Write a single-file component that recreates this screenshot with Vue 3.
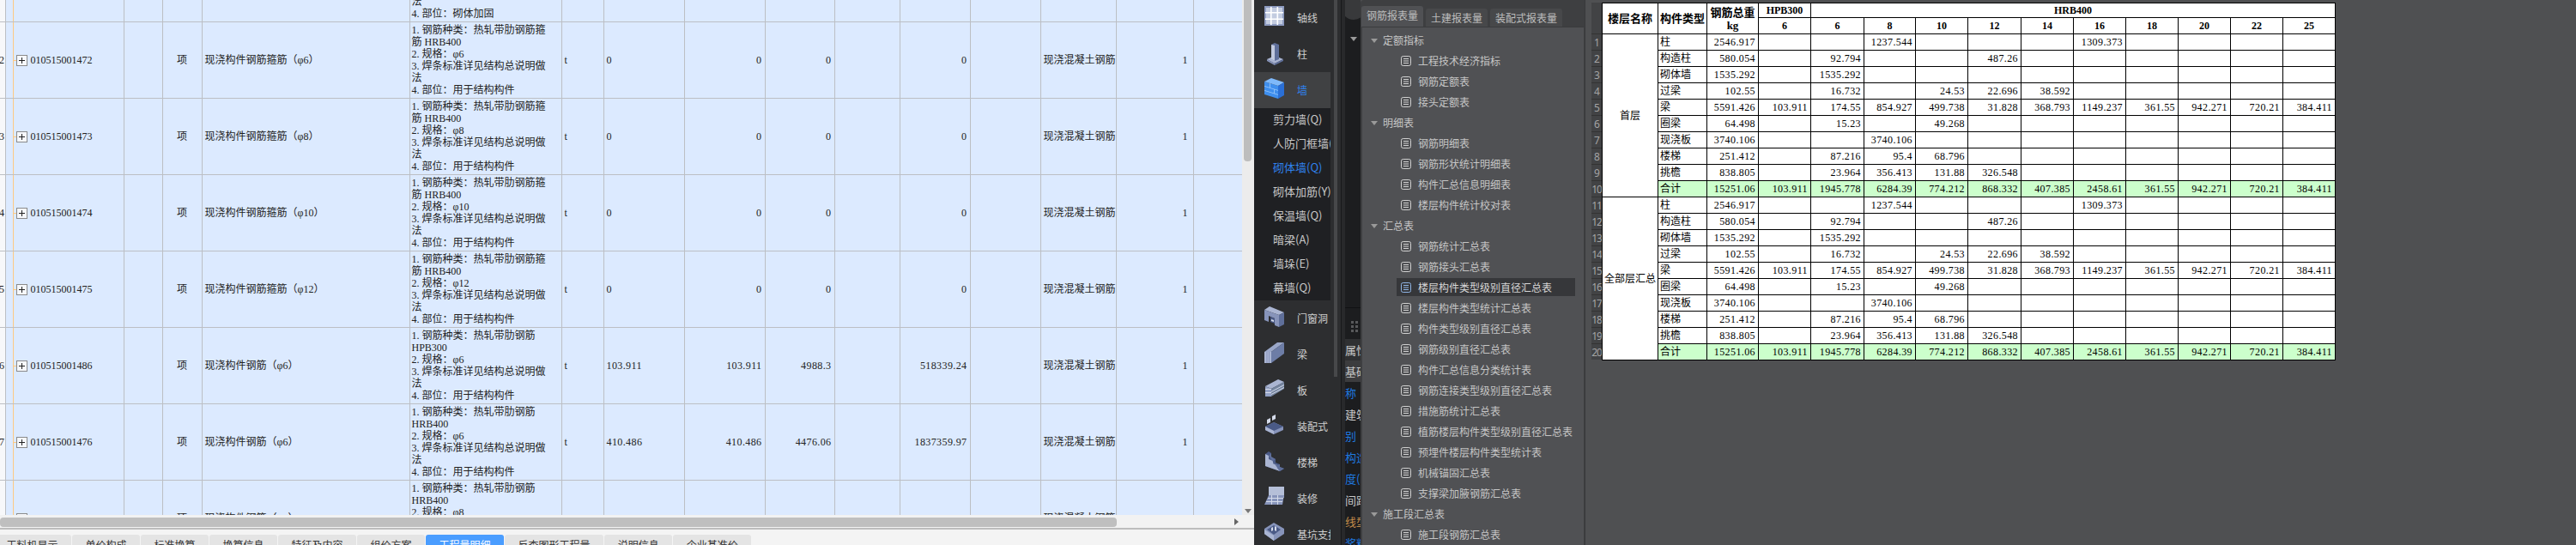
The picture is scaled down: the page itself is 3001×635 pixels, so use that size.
<script setup>
const leftCols = [6, 9, 129, 45, 46, 242, 177, 49, 94, 94, 81, 76, 82, 82, 88, 90, 57]

const descLines = (grade, spec, stirrup, place = '用于结构构件') => [
  stirrup ? '1. 钢筋种类：热轧带肋钢筋箍' : '1. 钢筋种类：热轧带肋钢筋',
  stirrup ? '筋 ' + grade : grade,
  '2. 规格：φ' + spec,
  '3. 焊条标准详见结构总说明做',
  '法',
  '4. 部位：' + place
]

const items = [
  { rn: '871', code: '010515001471', name: '现浇构件钢筋箍筋（φ4）', desc: descLines('HRB400', '4', true, '砌体加固'), a: '0', b: '0', c: '0', d: '0' },
  { rn: '872', code: '010515001472', name: '现浇构件钢筋箍筋（φ6）', desc: descLines('HRB400', '6', true), a: '0', b: '0', c: '0', d: '0' },
  { rn: '873', code: '010515001473', name: '现浇构件钢筋箍筋（φ8）', desc: descLines('HRB400', '8', true), a: '0', b: '0', c: '0', d: '0' },
  { rn: '874', code: '010515001474', name: '现浇构件钢筋箍筋（φ10）', desc: descLines('HRB400', '10', true), a: '0', b: '0', c: '0', d: '0' },
  { rn: '875', code: '010515001475', name: '现浇构件钢筋箍筋（φ12）', desc: descLines('HRB400', '12', true), a: '0', b: '0', c: '0', d: '0' },
  { rn: '876', code: '010515001486', name: '现浇构件钢筋（φ6）', desc: descLines('HPB300', '6', false), a: '103.911', b: '103.911', c: '4988.3', d: '518339.24' },
  { rn: '877', code: '010515001476', name: '现浇构件钢筋（φ6）', desc: descLines('HRB400', '6', false), a: '410.486', b: '410.486', c: '4476.06', d: '1837359.97' },
  { rn: '878', code: '010515001477', name: '现浇构件钢筋（φ8）', desc: descLines('HRB400', '8', false), a: '6284.39', b: '6284.39', c: '4451.84', d: '28160001.9' }
]

const tabs = ['工料机显示', '单价构成', '标准换算', '换算信息', '特征及内容', '组价方案', '工程量明细', '反查图形工程量', '说明信息', '企业基准价']

const L = '#aab5d2', M = '#8794ba', D = '#5f6f9a', K = '#4a5a86', W = '#d5dbea'
const icons = {
  axis: [
    { d: 'M0 0H23V23H0Z', f: '#8d9bc0' },
    { d: 'M2 2H21V21H2Z', f: '#c3cce0' },
    { d: 'M7 1h1.6v21H7zM14.5 1h1.6v21h-1.6zM1 7h21v1.6H1zM1 14.5h21v1.6H1z', f: '#fff' }
  ],
  column: [
    { d: 'M3 20L12 16L22 20L12 25Z', f: L },
    { d: 'M3 20L12 25V27L3 22Z', f: M },
    { d: 'M12 25L22 20V22L12 27Z', f: D },
    { d: 'M8 3L12 1L17 3V20L12 22L8 20Z', f: D },
    { d: 'M8 3L12 4V22L8 20Z', f: '#c1c9de' }
  ],
  wall: [
    { d: 'M0 4L16 9V24L0 19Z', f: '#3f8fee' },
    { d: 'M0 4L8 0L23 5L16 9Z', f: '#7fb9fa' },
    { d: 'M16 9L23 5V20L16 24Z', f: '#2a6fd6' },
    { d: 'M0 9l16 5v.8L0 9.8zM0 14l16 5v.8L0 14.8zM6 6l.8.2v5l-.8-.2zM11 13l.8.2v5l-.8-.2z', f: '#9cc9fb' }
  ],
  door: [
    { d: 'M0 4L6 0L23 7L17 10Z', f: L },
    { d: 'M0 4L17 10V24L12 22V14L5 11V18L0 16Z', f: M },
    { d: 'M17 10L23 7V21L17 24Z', f: D },
    { d: 'M7 12l5 2v6l-5-2z', f: K },
    { d: 'M8 15l3 1v2l-3-1z', f: W }
  ],
  beam: [
    { d: 'M0 11L15 0H23L8 11Z', f: '#9aa7c8' },
    { d: 'M8 11L23 0V13L8 24Z', f: '#6d7da6' },
    { d: 'M0 11H8V24H0Z', f: L },
    { d: 'M2.5 11h1v13h-1zM5 11h1v13H5z', f: M }
  ],
  slab: [
    { d: 'M1 9L16 1L23 4L8 12Z', f: L },
    { d: 'M1 9L8 12V21H1Z', f: '#93a1c4' },
    { d: 'M8 12L23 4V12L8 21Z', f: '#74849f' },
    { d: 'M1 12H8V13H1ZM1 16H8V17H1ZM8 15L23 7V8L8 16ZM8 18L23 10V11L8 19Z', f: W }
  ],
  prefab: [
    { d: 'M1 14L11 9L22 14V18L11 23L1 18Z', f: M },
    { d: 'M1 14L11 9L22 14L11 19Z', f: K },
    { d: 'M1 14L11 19V23L1 18Z', f: L },
    { d: 'M3 6l4-2v5l-4 2zM9 2l4-2v5l-4 2z', f: W }
  ],
  stair: [
    { d: 'M1 4L5 1L8 3V8L13 10V14L18 16V19L23 21L18 24L1 18Z', f: K },
    { d: 'M1 4L5 6V10L10 12V15L15 17V20L18 24L1 18Z', f: L },
    { d: 'M5 6L8 3V7L13 10L10 12V15L15 17L18 16V19L23 21L18 24L15 20Z', f: D }
  ],
  finish: [
    { d: 'M5 0H23V13H5Z', f: '#b5bfd8' },
    { d: 'M5 10H23L21 21H0Z', f: M },
    { d: 'M4 13h18v1H4zM2 17h19v1H2zM8 10h1v11H8zM15 10h1v11h-1z', f: W }
  ],
  pit: [
    { d: 'M11 0L23 7V13L11 21L0 13V7Z', f: M },
    { d: 'M11 3L19 8L11 14L3 8Z', f: K },
    { d: 'M0 8L11 15V21L0 13Z', f: L },
    { d: 'M8 6l2-1v4l-2 1zM12 4l2 1v5l-2-1z', f: W }
  ]
}

const mainTop = [
  { icon: 'axis', label: '轴线' },
  { icon: 'column', label: '柱' },
  { icon: 'wall', label: '墙', active: true }
]
const subItems = [
  { label: '剪力墙(Q)' }, { label: '人防门框墙(RFM)' }, { label: '砌体墙(Q)', active: true },
  { label: '砌体加筋(Y)' }, { label: '保温墙(Q)' }, { label: '暗梁(A)' }, { label: '墙垛(E)' }, { label: '幕墙(Q)' }
]
const mainBottom = [
  { icon: 'door', label: '门窗洞' }, { icon: 'beam', label: '梁' }, { icon: 'slab', label: '板' },
  { icon: 'prefab', label: '装配式' }, { icon: 'stair', label: '楼梯' }, { icon: 'finish', label: '装修' },
  { icon: 'pit', label: '基坑支护' }
]

const backRows = [
  { t: '属性', c: 'b-head' }, { t: '基础层', c: 'b-sel' }, { t: '称', c: 'b-blue' }, { t: '建筑', c: '' },
  { t: '别', c: 'b-blue' }, { t: '构造', c: 'b-blue' }, { t: '度(mm)', c: 'b-blue' }, { t: '间距', c: '' },
  { t: '线型', c: 'b-orange' }, { t: '浆料', c: 'b-blue' }
]

const tree = [
  { title: '定额指标', items: ['工程技术经济指标', '钢筋定额表', '接头定额表'] },
  { title: '明细表', items: ['钢筋明细表', '钢筋形状统计明细表', '构件汇总信息明细表', '楼层构件统计校对表'] },
  { title: '汇总表', items: ['钢筋统计汇总表', '钢筋接头汇总表', '楼层构件类型级别直径汇总表', '楼层构件类型统计汇总表', '构件类型级别直径汇总表', '钢筋级别直径汇总表', '构件汇总信息分类统计表', '钢筋连接类型级别直径汇总表', '措施筋统计汇总表', '植筋楼层构件类型级别直径汇总表', '预埋件楼层构件类型统计表', '机械锚固汇总表', '支撑梁加腋钢筋汇总表'] },
  { title: '施工段汇总表', items: ['施工段钢筋汇总表'] }
]
const selected = '楼层构件类型级别直径汇总表'

const reportCols = [65, 57, 60, 61, 62, 60, 61, 62, 61, 61, 61, 61, 61, 61]
const diameters = ['6', '8', '10', '12', '14', '16', '18', '20', '22', '25']
const base = [
  ['柱', '2546.917', '', '', '1237.544', '', '', '', '1309.373', '', '', '', ''],
  ['构造柱', '580.054', '', '92.794', '', '', '487.26', '', '', '', '', '', ''],
  ['砌体墙', '1535.292', '', '1535.292', '', '', '', '', '', '', '', '', ''],
  ['过梁', '102.55', '', '16.732', '', '24.53', '22.696', '38.592', '', '', '', '', ''],
  ['梁', '5591.426', '103.911', '174.55', '854.927', '499.738', '31.828', '368.793', '1149.237', '361.55', '942.271', '720.21', '384.411'],
  ['圈梁', '64.498', '', '15.23', '', '49.268', '', '', '', '', '', '', ''],
  ['现浇板', '3740.106', '', '', '3740.106', '', '', '', '', '', '', '', ''],
  ['楼梯', '251.412', '', '87.216', '95.4', '68.796', '', '', '', '', '', '', ''],
  ['挑檐', '838.805', '', '23.964', '356.413', '131.88', '326.548', '', '', '', '', '', ''],
  ['合计', '15251.06', '103.911', '1945.778', '6284.39', '774.212', '868.332', '407.385', '2458.61', '361.55', '942.271', '720.21', '384.411']
]
const groups = ['首层', '全部层汇总']
</script>

<template>
  <div class="app">
    <section class="grid-pane">
      <div class="grid-top">
        <div class="table-clip">
          <table class="boq">
            <colgroup><col v-for="(w, i) in leftCols" :key="i" :style="{ width: w + 'px' }" /></colgroup>
            <tbody>
              <tr v-for="row in items" :key="row.code">
                <td class="rn"><span>{{ row.rn }}</span></td>
                <td class="gutter"></td>
                <td class="code">
                  <span class="stub"></span><span class="plus"></span><span>{{ row.code }}</span>
                </td>
                <td></td>
                <td class="center">项</td>
                <td>{{ row.name }}</td>
                <td class="desc"><div v-for="(l, i) in row.desc" :key="i">{{ l }}</div></td>
                <td>t</td>
                <td class="spaced">{{ row.a }}</td>
                <td class="num spaced">{{ row.b }}</td>
                <td class="num spaced">{{ row.c }}</td>
                <td></td>
                <td class="num spaced">{{ row.d }}</td>
                <td></td>
                <td>现浇混凝土钢筋</td>
                <td class="num pad">1</td>
                <td></td>
              </tr>
            </tbody>
          </table>
        </div>
        <div class="vscroll"><div class="vthumb"></div><span class="arrow-down"></span></div>
      </div>
      <div class="hscroll"><div class="hthumb"></div><span class="arrow-right"></span></div>
      <nav class="tabs">
        <span v-for="t in tabs" :key="t" class="tab" :class="{ on: t === '工程量明细' }">{{ t }}</span>
      </nav>
    </section>

    <aside class="sidebar">
      <div v-for="m in mainTop" :key="m.label" class="main-item" :class="{ on: m.active }">
        <svg class="ico" viewBox="0 0 24 28" width="24" height="28"><path v-for="(p, i) in icons[m.icon]" :key="i" :d="p.d" :fill="p.f" /></svg>
        <span>{{ m.label }}</span>
      </div>
      <div class="subs">
        <div v-for="s in subItems" :key="s.label" class="sub" :class="{ on: s.active }">{{ s.label }}</div>
      </div>
      <div v-for="m in mainBottom" :key="m.label" class="main-item">
        <svg class="ico" viewBox="0 0 24 28" width="24" height="28"><path v-for="(p, i) in icons[m.icon]" :key="i" :d="p.d" :fill="p.f" /></svg>
        <span>{{ m.label }}</span>
      </div>
    </aside>
    <div class="side-gutter"><div class="side-thumb"></div></div>
    <div class="gap"></div>

    <div class="back">
      <div class="back-top">
        <span class="circle"></span>
        <div class="back-tree"><span class="tri"></span><span class="cut">楼层</span></div>
      </div>
      <div class="back-bottom">
        <div class="dots"><i v-for="n in 6" :key="n"></i></div>
        <div v-for="(r, i) in backRows" :key="i" class="back-row" :class="r.c">{{ r.t }}</div>
      </div>
    </div>

    <section class="dialog">
      <div class="dlg-tabs">
        <span class="dlg-tab on">钢筋报表量</span>
        <span class="dlg-tab">土建报表量</span>
        <span class="dlg-tab">装配式报表量</span>
      </div>
      <div class="dlg-body">
        <template v-for="g in tree" :key="g.title">
          <div class="t-group"><span class="tri"></span>{{ g.title }}</div>
          <div v-for="it in g.items" :key="it" class="t-item">
            <div class="t-inner" :class="{ sel: it === selected }">
              <svg class="doc" viewBox="0 0 12 12" width="12" height="12">
                <rect x=".5" y=".5" width="11" height="11" rx="2" fill="none" stroke="currentColor" />
                <path d="M3 3.5h6M3 6h6M3 8.5h6" stroke="currentColor" fill="none" />
              </svg>
              <span>{{ it }}</span>
            </div>
          </div>
        </template>
      </div>
    </section>

    <section class="report">
      <div class="rnums">
        <div class="rn-head"></div>
        <div v-for="n in 20" :key="n" class="rnum">{{ n }}</div>
      </div>
      <table class="sheet">
        <colgroup><col v-for="(w, i) in reportCols" :key="i" :style="{ width: w + 'px' }" /></colgroup>
        <thead>
          <tr class="h1">
            <th rowspan="2">楼层名称</th>
            <th rowspan="2">构件类型</th>
            <th rowspan="2">钢筋总重<br />kg</th>
            <th>HPB300</th>
            <th colspan="10">HRB400</th>
          </tr>
          <tr class="h2">
            <th>6</th>
            <th v-for="d in diameters" :key="d">{{ d }}</th>
          </tr>
        </thead>
        <tbody v-for="g in groups" :key="g">
          <tr v-for="(r, i) in base" :key="i" :class="{ total: r[0] === '合计' }">
            <td v-if="i === 0" rowspan="10" class="floor">{{ g }}</td>
            <td class="type">{{ r[0] }}</td>
            <td v-for="(v, j) in r.slice(1)" :key="j" class="val">{{ v }}</td>
          </tr>
        </tbody>
      </table>
    </section>
  </div>
</template>

<style>
html, body { margin: 0; padding: 0; background: #4f5052; overflow: hidden; }
</style>

<style scoped>
.app {
  display: flex;
  width: 3001px;
  height: 635px;
  overflow: hidden;
  font: 12px/14px "Liberation Serif", "Noto Sans CJK SC", serif;
  color: #222;
}

/* left grid */
.grid-pane { width: 1461px; flex: none; display: flex; flex-direction: column; background: #f4f4f4; }
.grid-top { display: flex; height: 600px; flex: none; }
.table-clip { width: 1447px; height: 600px; overflow: hidden; flex: none; background: #dceaff; }
.boq { border-collapse: collapse; table-layout: fixed; width: 1447px; margin-top: -64px; }
.boq td {
  height: 89px;
  padding: 0 3px;
  border: 1px solid #bcbfc4;
  background: #dceaff;
  white-space: nowrap;
  overflow: hidden;
  box-sizing: border-box;
}
.boq td.rn { background: #f7f8fa; padding: 0; text-align: left; text-indent: -13px; border-left: 0; }
.boq td.gutter { padding: 0; border-right-color: #fdc983; }
.boq td.code { padding: 0 0 0 3px; position: relative; }
.boq .stub { position: absolute; left: 0; top: 50%; width: 3px; height: 1px; background: #fdc983; }
.boq .plus {
  display: inline-block;
  vertical-align: middle;
  width: 13px;
  height: 13px;
  margin-right: 4px;
  box-sizing: border-box;
  border: 1px solid #8a8a8a;
  background:
    linear-gradient(#222, #222) center / 7px 1px no-repeat,
    linear-gradient(#222, #222) center / 1px 7px no-repeat,
    #f6f8fc;
}
.boq td.center { text-align: center; }
.boq td.num { text-align: right; }
.boq td.spaced { letter-spacing: .4px; }
.boq td.pad { padding-right: 6px; }
.boq td.desc { padding: 0 2px; }
.vscroll { width: 14px; flex: none; background: #ececec; position: relative; }
.vthumb { position: absolute; left: 2px; top: -6px; width: 9px; height: 194px; border-radius: 4px; background: #bdbdbd; }
.arrow-down {
  position: absolute; left: 3px; bottom: 2px;
  border-left: 4px solid transparent; border-right: 4px solid transparent; border-top: 5px solid #777;
}
.hscroll {
  height: 17px; flex: none; box-sizing: border-box; position: relative;
  background: #f2f2f2; border-bottom: 2px solid #bdbdbd;
}
.hthumb { position: absolute; left: 0; top: 3px; width: 1301px; height: 11px; border-radius: 4px; background: #bfbfbf; }
.arrow-right {
  position: absolute; left: 1438px; top: 4px;
  border-top: 4px solid transparent; border-bottom: 4px solid transparent; border-left: 5px solid #666;
}
.tabs { display: flex; gap: 1px; padding-top: 6px; margin-left: -8px; font-family: "Noto Sans CJK SC", sans-serif; }
.tab {
  padding: 5px 15.5px 0;
  height: 26px;
  flex: none;
  background: #e4e4e4;
  border-radius: 3px 3px 0 0;
  color: #333;
}
.tab.on { background: #4a9dff; color: #fff; }

/* sidebar */
.sidebar {
  width: 89px; flex: none; background: #2d2e30; color: #cfcfcf; overflow: hidden;
  font-family: "Noto Sans CJK SC", sans-serif;
}
.main-item { height: 42px; display: flex; align-items: center; padding-left: 12px; box-sizing: border-box; white-space: nowrap; }
.main-item .ico { flex: none; margin-right: 14px; }
.main-item.on { background: #404143; color: #2f82ee; }
.subs { background: #1f2023; height: 224px; }
.sub { height: 28px; line-height: 26px; padding-left: 22px; font-size: 13px; color: #c8c8c8; white-space: nowrap; overflow: hidden; }
.sub.on { color: #2f82ee; }
.side-gutter { width: 13px; flex: none; background: #2c2d2f; position: relative; border-right: 1px solid #17181a; box-sizing: border-box; }
.side-thumb { position: absolute; left: 4px; top: 0; width: 4px; height: 439px; background: #47484a; }
.gap { width: 4px; flex: none; background: #28292b; }

/* panel behind the dialog */
.back { width: 18px; flex: none; background: #1c1d1f; overflow: hidden; font-family: "Noto Sans CJK SC", sans-serif; color: #c8c8c8; }
.back-top { height: 359px; position: relative; border-bottom: 1px solid #101113; box-sizing: border-box; }
.circle { position: absolute; left: -4px; top: -5px; width: 28px; height: 28px; border-radius: 50%; background: #38393b; }
.back-tree { position: absolute; top: 38px; left: 6px; display: flex; align-items: center; gap: 4px; white-space: nowrap; color: #4d86c8; }
.back-bottom { padding-top: 6px; }
.dots { height: 30px; width: 11px; margin-left: 7px; display: grid; grid-template-columns: 3px 3px; gap: 2px 2px; align-content: center; }
.dots i { height: 3px; background: #58595b; }
.back-row { height: 25px; line-height: 25px; font-size: 13px; white-space: nowrap; }
.b-head { background: #2f3032; }
.b-sel { background: #3c3c3e; }
.b-blue { color: #1f7ae0; }
.b-orange { color: #c08a4a; }
.tri {
  display: inline-block; flex: none;
  border-left: 4px solid transparent; border-right: 4px solid transparent; border-top: 5px solid #9a9a9a;
}

/* dialog */
.dialog { width: 261px; flex: none; background: #3e3f41; display: flex; flex-direction: column; font-family: "Noto Sans CJK SC", sans-serif; color: #c6c6c6; border-radius: 4px 0 0 0; }
.dlg-tabs { display: flex; gap: 3px; padding: 7px 0 0 1px; height: 31px; box-sizing: border-box; flex: none; align-items: flex-end; }
.dlg-tab { padding: 0 6px; height: 21px; line-height: 21px; background: #47484a; border-radius: 3px 3px 0 0; color: #bdbdbd; white-space: nowrap; }
.dlg-tab.on { height: 24px; line-height: 22px; background: #505154; }
.dlg-body { flex: 1; margin-left: 2px; margin-right: 1px; background: #505154; padding-top: 3px; overflow: hidden; border-top: 1px solid #3a3b3d; }
.t-group { height: 24px; display: flex; align-items: center; padding-left: 10px; gap: 6px; }
.t-item { height: 24px; padding: 1px 10px 0 40px; box-sizing: border-box; }
.t-inner { display: flex; align-items: center; gap: 8px; height: 21px; padding-left: 5px; white-space: nowrap; }
.t-inner.sel { background: #36373a; color: #d6d6d6; }
.t-inner.sel .doc { color: #8fb4e4; }
.doc { flex: none; color: #d0d0d0; }

/* report */
.report { flex: 1; background: #4f5052; display: flex; align-items: flex-start; padding: 3px 0 0 7px; box-sizing: border-box; border-left: 1px solid #38393b; }
.rnums { width: 12px; flex: none; background: #424345; font: 12px/19px "Noto Sans", sans-serif; color: #a5a5a5; text-align: center; overflow: hidden; }
.rn-head { height: 36px; }
.rnum { height: 19px; box-sizing: border-box; border-top: 1px solid #333; letter-spacing: -1px; }
.sheet { border-collapse: collapse; table-layout: fixed; width: 854px; background: #fff; color: #000; border: 1px solid #000; }
.sheet th { border: 1px solid #000; padding: 0; font-size: 13px; font-weight: 700; line-height: 15px; white-space: nowrap; overflow: hidden; }
.sheet .h1 th { height: 17px; box-sizing: border-box; font-size: 12px; }
.sheet .h1 th[rowspan] { font-size: 13px; }
.sheet .h2 th { height: 19px; box-sizing: border-box; font-size: 12px; }
.sheet tbody td { height: 19px; box-sizing: border-box; border: 1px solid #000; padding: 0; white-space: nowrap; overflow: hidden; }
.sheet .floor { text-align: center; background: #fff; }
.sheet .type { padding-left: 2px; }
.sheet .val { text-align: right; padding-right: 3px; letter-spacing: .4px; }
.sheet .total td { background: #ccffcc; }
.sheet .total td.floor { background: #fff; }
</style>
